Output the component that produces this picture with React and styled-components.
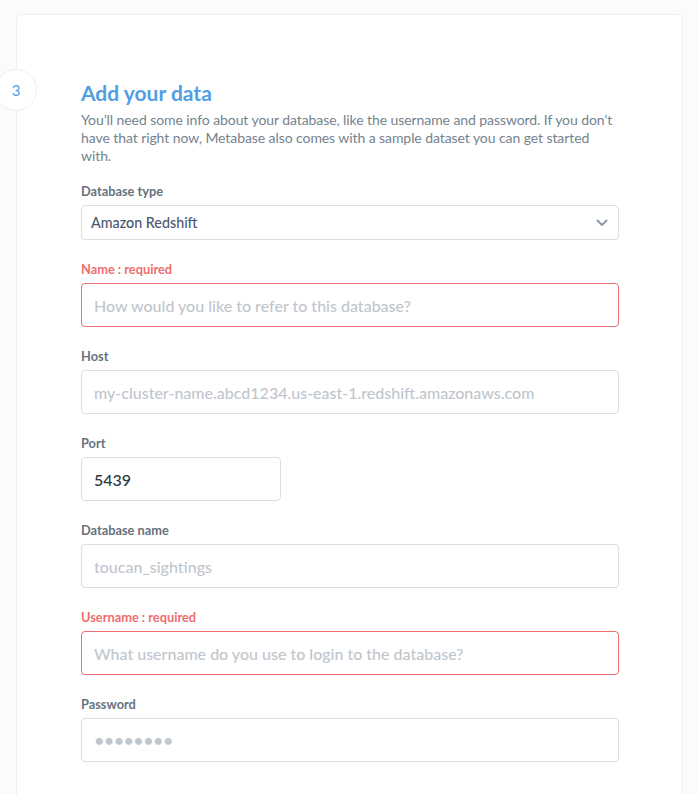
import React from "react";
import styled, { createGlobalStyle } from "styled-components";

const GlobalStyle = createGlobalStyle`
	html, body {
		margin: 0;
		padding: 0;
		background: #f9fbfc;
		font-family: Lato, "Noto Sans", sans-serif;
		-webkit-font-smoothing: antialiased;
	}
	* {
		box-sizing: border-box;
	}
`;

const fields = [
	{ id: "name", label: "Name", required: true, placeholder: "How would you like to refer to this database?" },
	{ id: "host", label: "Host", placeholder: "my-cluster-name.abcd1234.us-east-1.redshift.amazonaws.com" },
	{ id: "port", label: "Port", value: "5439", small: true },
	{ id: "dbname", label: "Database name", placeholder: "toucan_sightings" },
	{ id: "user", label: "Username", required: true, placeholder: "What username do you use to login to the database?" },
	{ id: "pass", label: "Password", placeholder: "••••••••", password: true },
];

const App = () => {
	return (
		<>
			<GlobalStyle />
			<Page>
				<Card>
					<StepBadge>3</StepBadge>
					<Title>Add your data</Title>
					<Description>
						You’ll need some info about your database, like the username and password. If you don’t
						have that right now, Metabase also comes with a sample dataset you can get started with.
					</Description>

					{/* Database type select */}
					<Field>
						<Label>Database type</Label>
						<SelectBox>
							<span>Amazon Redshift</span>
							<svg width="12" height="8" viewBox="0 0 12 8" fill="none">
								<path d="M1.5 1.5L6 6L10.5 1.5" stroke="#8e99a4" strokeWidth="2" strokeLinecap="round" strokeLinejoin="round" />
							</svg>
						</SelectBox>
					</Field>

					{/* Connection fields */}
					{fields.map((f) => (
						<Field key={f.id}>
							<Label $error={f.required}>
								{f.label}
								{f.required && " : required"}
							</Label>
							<Input
								$error={f.required}
								$small={f.small}
								$dots={f.password}
								placeholder={f.placeholder}
								defaultValue={f.value}
							/>
						</Field>
					))}
				</Card>
			</Page>
		</>
	);
};

const Page = styled.main`
	padding: 14px 14px 0 16px;
	min-height: 794px;
	overflow: hidden;
`;

const Card = styled.section`
	position: relative;
	background: #fff;
	border: 1px solid #eceff2;
	border-radius: 6px;
	padding: 65px 63px 40px 64px;
	min-height: 820px;
`;

const StepBadge = styled.div`
	position: absolute;
	left: -22px;
	top: 54px;
	width: 42px;
	height: 42px;
	border-radius: 50%;
	background: #fff;
	border: 1px solid #eceff2;
	color: #509ee3;
	font-size: 15px;
	display: flex;
	align-items: center;
	justify-content: center;
`;

const Title = styled.h2`
	margin: 0;
	font-size: 21px;
	font-weight: 700;
	color: #509ee3;
	line-height: 26px;
`;

const Description = styled.p`
	margin: 5px 0 18px;
	max-width: 536px;
	font-size: 14px;
	line-height: 18px;
	letter-spacing: -0.08px;
	color: #74838f;
`;

const Field = styled.div`
	margin-bottom: 21px;
`;

const Label = styled.label`
	display: block;
	font-size: 12.8px;
	font-weight: 700;
	line-height: 16px;
	margin-bottom: 6px;
	color: ${(p) => (p.$error ? "#ed6e6e" : "#66727e")};
`;

const SelectBox = styled.div`
	display: flex;
	align-items: center;
	justify-content: space-between;
	height: 35px;
	padding: 0 10px 0 9px;
	border: 1px solid #dadde1;
	border-radius: 4px;
	font-size: 14.3px;
	color: #4c5773;
	font-weight: 500;
`;

const Input = styled.input`
	display: block;
	width: ${(p) => (p.$small ? "200px" : "100%")};
	height: 44px;
	padding: 0 12px;
	border: 1px solid ${(p) => (p.$error ? "#ed6e6e" : "#dadde1")};
	border-radius: 4px;
	font-family: Lato, "Noto Sans", sans-serif;
	font-size: ${(p) => (p.$dots ? "18px" : "16px")};
	font-weight: 500;
	color: #2e353b;
	outline: none;
	letter-spacing: ${(p) => (p.$dots ? "-0.6px" : "normal")};

	&::placeholder {
		color: #c0c6cd;
	}
`;

export default App;
